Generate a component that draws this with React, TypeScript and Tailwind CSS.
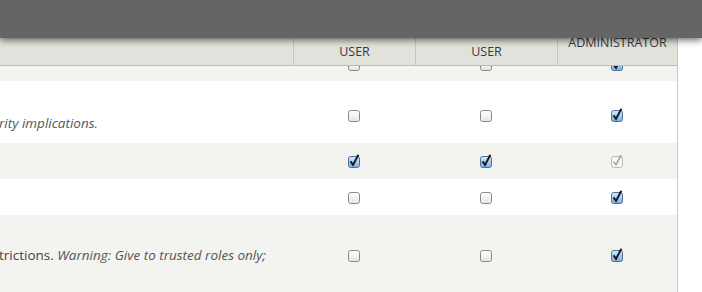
import React from 'react';

type BoxState = 'off' | 'on' | 'locked';

const Checkbox: React.FC<{ state: BoxState }> = ({ state }) => {
  if (state === 'off') {
    return (
      <svg width="14" height="15" viewBox="0 0 14 15" className="block overflow-visible">
        <defs>
          <linearGradient id="offFill" x1="0" y1="0" x2="0" y2="1">
            <stop offset="0" stopColor="#ffffff" />
            <stop offset="1" stopColor="#e4e4e4" />
          </linearGradient>
        </defs>
        <rect x="1.5" y="2.5" width="11" height="11" rx="2.2" fill="url(#offFill)" stroke="#8a8a8a" />
      </svg>
    );
  }
  if (state === 'locked') {
    return (
      <svg width="14" height="15" viewBox="0 0 14 15" className="block overflow-visible">
        <rect x="1.5" y="2.5" width="11" height="11" rx="2.2" fill="#f6f6f6" stroke="#b8b8b8" />
        <path d="M3.6 7.6 L6 10.8 L11.2 1.2" fill="none" stroke="#9a9a9a" strokeWidth="1.4" />
      </svg>
    );
  }
  return (
    <svg width="14" height="15" viewBox="0 0 14 15" className="block overflow-visible">
      <defs>
        <linearGradient id="onFill" x1="0" y1="0" x2="0" y2="1">
          <stop offset="0" stopColor="#d9ebfd" />
          <stop offset="1" stopColor="#78b0ea" />
        </linearGradient>
      </defs>
      <rect x="1.5" y="2.5" width="11" height="11" rx="2.2" fill="url(#onFill)" stroke="#4f6f95" />
      <path d="M3.5 7.4 L6 10.9 L11.4 0.8" fill="none" stroke="#1b1b1b" strokeWidth="2" />
    </svg>
  );
};

const Cells: React.FC<{ boxes: BoxState[]; className?: string }> = ({ boxes, className }) => (
  <>
    {boxes.map((b, i) => (
      <div key={i} className={`flex justify-center ${className ?? 'items-center'}`}>
        <Checkbox state={b} />
      </div>
    ))}
  </>
);

const cols = 'grid grid-cols-[293px_122px_142px_120px]';

export default function App() {
  return (
    <div className="relative w-[702px] h-[292px] overflow-hidden bg-white font-['Open_Sans',sans-serif] text-[13px]">
      <div className="absolute top-0 left-0 right-0 h-[38px] bg-[#656565] shadow-[0_2px_7px_rgba(0,0,0,0.6)] z-10" />

      <div className="w-[678px] border-r border-[#c9c9c4]">
        <div className={`${cols} h-[66px] bg-[#e2e2dc] border-b border-[#bdbdb8] text-[#3a3a3a] text-[12.5px] leading-[18px]`}>
          <div />
          <div className="border-l border-[#c4c4be] flex items-center justify-center text-center pt-[21px]">
            <div>
              ANONYMOUS
              <br />
              USER
            </div>
          </div>
          <div className="border-l border-[#c4c4be] flex items-center justify-center text-center pt-[21px]">
            <div>
              AUTHENTICATED
              <br />
              USER
            </div>
          </div>
          <div className="border-l border-[#c4c4be] flex items-center justify-center text-center pt-[21px]">
            <div>ADMINISTRATOR</div>
          </div>
        </div>

        <div className={`${cols} h-[15px] bg-[#f3f3ef] overflow-hidden`}>
          <div />
          <Cells boxes={['off', 'off', 'on']} className="items-start -mt-[9px]" />
        </div>

        <div className={`${cols} h-[62px] bg-white`}>
          <div className="text-[#555] italic pt-[32px] -ml-[1px] whitespace-nowrap text-[13.5px]">rity implications.</div>
          <Cells boxes={['off', 'off', 'on']} className="items-center pt-[6px]" />
        </div>

        <div className={`${cols} h-[36px] bg-[#f3f3ef]`}>
          <div />
          <Cells boxes={['on', 'on', 'locked']} />
        </div>

        <div className={`${cols} h-[36px] bg-white`}>
          <div />
          <Cells boxes={['off', 'off', 'on']} />
        </div>

        <div className={`${cols} h-[80px] bg-[#f3f3ef]`}>
          <div className="text-[#444] flex items-center -ml-[1px] whitespace-nowrap text-[13.5px]">
            trictions.&nbsp;<span className="italic text-[#555]">Warning: Give to trusted roles only;</span>
          </div>
          <Cells boxes={['off', 'off', 'on']} />
        </div>
      </div>
    </div>
  );
}
